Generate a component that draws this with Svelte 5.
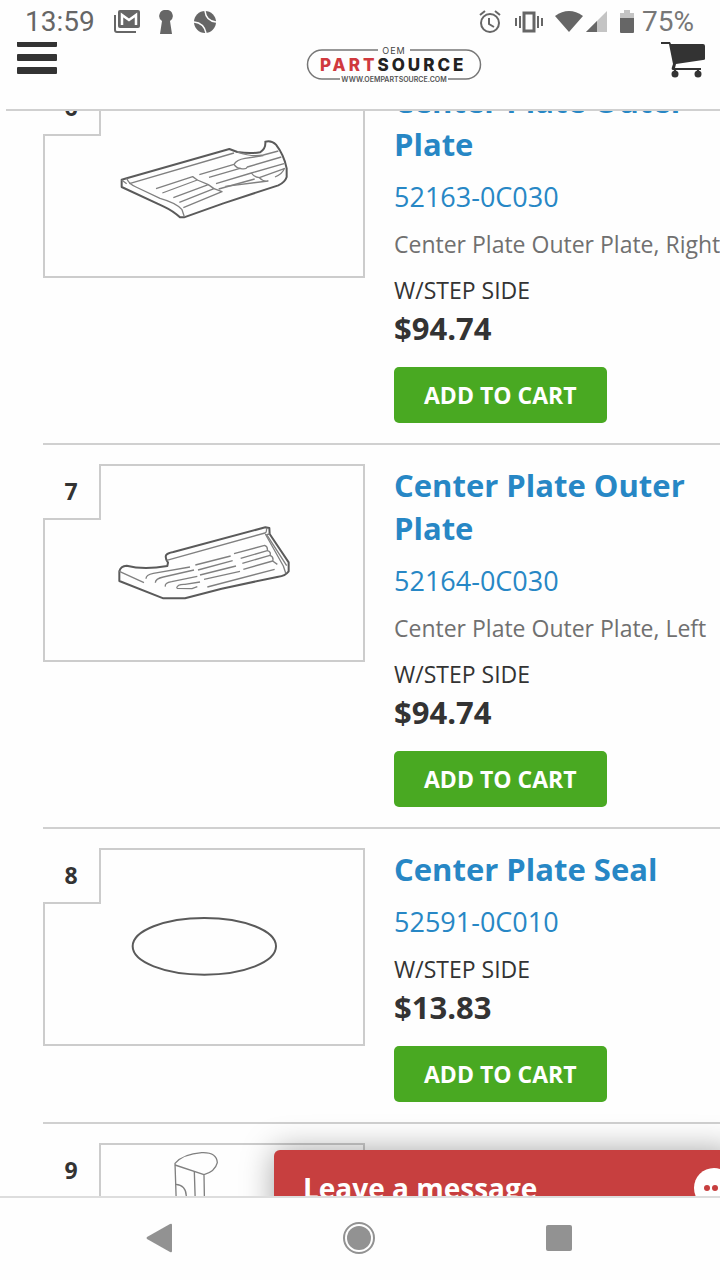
<script>
  import { onMount } from 'svelte';

  const parts = [
    {
      pos: 6, name: 'Center Plate Outer Plate', sku: '52163-0C030',
      desc: 'Center Plate Outer Plate, Right', price: '$94.74',
      viewBox: '45 -51 954 582',
      outline: [
        'M275 242 L290 238 L598 150 L622 159 Q660 165 690 160 Q708 150 706 128 Q724 123 738 137 Q762 168 770 208 V234 Q765 250 745 259 L580 313 L462 355 H450 Q430 336 400 322 L275 264 Z'
      ],
      detail: [
        'M290 238 Q296 255 318 264 L390 298 Q440 312 456 332 L463 353',
        'M298 254 L612 162', 'M275 243 L290 254',
        'M622 159 Q665 175 700 168 L745 156',
        'M378 269 L488 233 L502 243 L397 282', 'M502 243 L535 257 L430 296',
        'M535 257 L552 269 L448 310', 'M552 269 L576 278 L460 326',
        'M508 227 L612 196 Q620 182 645 178 L700 170',
        'M537 235 L630 208 Q648 213 652 204 L754 174', 'M612 196 Q620 208 632 208',
        'M558 254 L664 222 L762 194', 'M664 222 Q672 234 688 236 L765 208',
        'M566 270 L674 240', 'M688 236 Q700 249 714 246 L586 262',
        'M763 208 Q758 224 735 234'
      ]
    },
    {
      pos: 7, name: 'Center Plate Outer Plate', sku: '52164-0C030',
      desc: 'Center Plate Outer Plate, Left', price: '$94.74',
      viewBox: '45 36 954 582',
      outline: [
        'M268 352 Q272 336 290 335 Q340 348 412 336 L414 326 Q405 314 408 304 Q412 297 430 294 L706 220 L718 222 L719 240 L776 325 V352 Q765 366 745 368 L575 404 L465 433 H400 L268 381 Z'
      ],
      detail: [
        'M410 319 L705 237 Q710 236 710 221', 'M268 352 L342 386',
        'M706 240 L760 336 L767 357', 'M719 240 L710 242 L770 335',
        'M348 374 Q348 362 370 358 L480 339', 'M376 386 Q376 374 400 369 L492 348',
        'M406 398 Q403 387 425 383 L502 367', 'M440 402 Q442 390 465 391 L510 384 M440 403 L486 404 L502 398',
        'M496 333 L602 306', 'M504 348 L608 320', 'M510 363 L618 336', 'M522 376 L630 352',
        'M532 399 L734 346', 'M612 299 L704 274 Q714 278 712 290 L632 313',
        'M712 290 Q724 293 720 304 L637 328', 'M720 304 Q732 309 728 321 L640 346',
        'M728 321 L742 331'
      ]
    },
    {
      pos: 8, name: 'Center Plate Seal', sku: '52591-0C010',
      desc: '', price: '$13.83',
      viewBox: '45 33 954 582',
      outline: ['M308 322 A215 85 0 0 1 738 322 A215 85 0 0 1 308 322 Z'],
      detail: []
    },
    {
      pos: 9, name: 'Center Plate Cover', sku: '52165-0C010',
      desc: '', price: '$21.40',
      viewBox: '45 105 954 582',
      outline: [],
      detail: [
        'M440 310 L435 160 Q460 132 515 128 Q560 126 562 158 Q555 185 522 194 L524 310',
        'M435 165 L522 194', 'M493 185 L497 310', 'M437 223 Q468 225 469 258 V310'
      ]
    }
  ];

  let scroller;

  // the list opens part way into the first card
  onMount(() => {
    scroller.scrollTop = 52;
  });
</script>

<div class="screen">
  <div class="status">
    <div class="status-group">
      <span class="clock">13:59</span>
      <svg class="mail" width="28" height="24" viewBox="0 0 28 24">
        <path d="M2 5v15q0 2 2 2h19" fill="none" stroke="#666" stroke-width="2" />
        <rect x="5" y="0" width="22" height="18" rx="2" fill="#666" />
        <path d="M9 15V5l7 5 7-5v10" fill="none" stroke="#fff" stroke-width="2.500" />
      </svg>
      <svg class="keyhole" width="14" height="24" viewBox="0 0 14 24">
        <path d="M7 0a6 6 0 0 1 4 11l2 13H1l2-13A6 6 0 0 1 7 0z" fill="#666" />
      </svg>
      <svg width="22" height="22" viewBox="0 0 22 22">
        <circle cx="11" cy="11" r="11" fill="#666" />
        <path d="M11 0q1 10 11 11M0 11q10 1 12 11" fill="none" stroke="#fff" stroke-width="1.500" />
      </svg>
    </div>
    <div class="status-group">
      <svg width="22" height="24" viewBox="0 0 22 24" fill="none" stroke="#666" stroke-width="2">
        <circle cx="11" cy="13" r="9" />
        <path d="M10 8v6l5 3M1 5l5-4M21 5l-5-4" />
      </svg>
      <svg class="vibrate" width="28" height="22" viewBox="0 0 28 22" fill="none" stroke="#666">
        <rect x="9" y="2" width="10" height="18" stroke-width="3" />
        <path d="M1 7v8M5 5v12M23 5v12M27 7v8" stroke-width="2" />
      </svg>
      <svg class="wifi" width="28" height="22" viewBox="0 0 28 22">
        <path d="M0 5q14-10 28 0L14 21z" fill="#666" />
      </svg>
      <svg class="signal" width="22" height="22" viewBox="0 0 22 22">
        <path d="M21 0v21H0z" fill="#c4c4c4" />
        <path d="M11 10v11H0z" fill="#666" />
      </svg>
      <svg class="battery" width="14" height="24" viewBox="0 0 14 24">
        <path d="M4 0h6v3h4v6H0V3h4z" fill="#c4c4c4" />
        <path d="M0 8h14v14q0 1-1 1H1q-1 0-1-1z" fill="#666" />
      </svg>
      <span class="clock percent">75%</span>
    </div>
  </div>

  <header>
    <button class="icon-btn" aria-label="Menu">
      <svg width="40" height="32" viewBox="0 0 40 32" fill="#333">
        <path d="M0 0h40v4q0 1-1 1H1q-1 0-1-1z" />
        <rect y="12" width="40" height="7" rx="1" />
        <rect y="25" width="40" height="7" rx="1" />
      </svg>
    </button>
    <a class="logo" href="/" aria-label="OEM Part Source">
      <svg width="176" height="38" viewBox="0 0 176 38">
        <path d="M72 4H16a14 14 0 0 0 0 29h18M104 4h56a14 14 0 0 1 0 29h-18" fill="none" stroke="#777" stroke-width="1.500" />
        <text class="logo-small" x="88" y="8" text-anchor="middle">OEM</text>
        <text class="logo-main" x="14" y="25"><tspan fill="#d0393e">PART</tspan><tspan>SOURCE</tspan></text>
        <text class="logo-url" x="88" y="36" text-anchor="middle">WWW.OEMPARTSOURCE.COM</text>
      </svg>
    </a>
    <button class="icon-btn" aria-label="Cart">
      <svg width="44" height="36" viewBox="0 0 44 36" fill="#333">
        <path d="M0 0h9l1 2h32q2 0 2 2v13q0 1-2 1L15 22l-1 4h26v2H12q-2 0-1-3l1-3L8 2H0z" />
        <circle cx="14" cy="32" r="3.500" />
        <circle cx="37" cy="32" r="3.500" />
        <path d="M13 26h2v4h-2zM36 26h2v4h-2z" />
      </svg>
    </button>
  </header>

  <main>
    <div class="scroller" bind:this={scroller}>
      {#each parts as part (part.pos)}
        <article>
          <div class="thumb">
            <svg viewBox={part.viewBox} fill="none" stroke-linejoin="round">
              {#each part.outline as d}
                <path {d} stroke="#5a5a5a" stroke-width="6" />
              {/each}
              {#each part.detail as d}
                <path {d} stroke="#808080" stroke-width="4" />
              {/each}
            </svg>
            <span class="pos">{part.pos}</span>
          </div>
          <div class="info">
            <h2><a href="/parts/{part.sku}">{part.name}</a></h2>
            <a class="sku" href="/parts/{part.sku}">{part.sku}</a>
            {#if part.desc}
              <p class="desc">{part.desc}</p>
            {/if}
            <p class="fit">W/STEP SIDE</p>
            <p class="price">{part.price}</p>
            <button class="add">ADD TO CART</button>
          </div>
        </article>
      {/each}
    </div>

    <button class="chat">
      <span>Leave a message</span>
      <svg width="40" height="40" viewBox="0 0 40 40">
        <circle cx="20" cy="20" r="20" fill="#fff" />
        <g fill="#c73f3f">
          <circle cx="13" cy="20" r="3" />
          <circle cx="21" cy="20" r="3" />
          <circle cx="29" cy="20" r="3" />
        </g>
      </svg>
    </button>
  </main>

  <nav>
    <button aria-label="Back">
      <svg width="26" height="30" viewBox="0 0 26 30">
        <path d="M24 1q2-1 2 1v26q0 2-2 1L1 16q-1-1 0-2z" fill="#929292" />
      </svg>
    </button>
    <button aria-label="Home">
      <svg width="32" height="32" viewBox="0 0 32 32">
        <circle cx="16" cy="16" r="15" fill="none" stroke="#929292" stroke-width="2" />
        <circle cx="16" cy="16" r="12" fill="#929292" />
      </svg>
    </button>
    <button aria-label="Recent apps">
      <svg width="28" height="28" viewBox="0 0 28 28">
        <rect x="1" y="1" width="26" height="26" rx="2" fill="#929292" />
      </svg>
    </button>
  </nav>
</div>

<style>
  :global(body) { background: #fefefe; }

  .screen {
    display: flex;
    flex-direction: column;
    height: 100vh;
    overflow: hidden;
    background: #fefefe;
    color: #333;
    font-family: "Open Sans", "Noto Sans", sans-serif;
  }

  svg { display: block; flex-shrink: 0; }
  h2, p { margin: 0; }
  a { color: #2787c5; text-decoration: none; }
  button { font-family: inherit; border: 0; padding: 0; background: none; cursor: pointer; }

  .status {
    display: flex; align-items: center; justify-content: space-between;
    height: 42px; padding: 2px 26px 0 25px; flex-shrink: 0; box-sizing: border-box;
  }
  .status-group { display: flex; align-items: center; }
  .clock {
    font-family: Roboto, sans-serif; font-size: 28px;
    line-height: 42px; color: #666;
  }
  .mail    { margin-left: 18px; }
  .keyhole { margin: 0 21px 0 18px; }
  .vibrate { margin-left: 14px; }
  .wifi    { margin-left: 12px; }
  .signal  { margin-left: 3px; }
  .battery { margin: 0 8px 0 12px; }
  .percent { color: #777; }

  header {
    display: flex; align-items: flex-start; justify-content: space-between;
    height: 67px; margin-left: 6px; padding: 0 15px 0 11px;
    border-bottom: 2px solid #d0d0d0; flex-shrink: 0;
  }
  .logo { padding: 4px 0 0 70px; }
  .logo-main {
    font-family: Inter, sans-serif; font-size: 17px; font-weight: 800;
    letter-spacing: 3px; fill: #222;
  }
  .logo-small { font-family: Inter, sans-serif; font-size: 9px; letter-spacing: 1px; fill: #444; }
  .logo-url { font-family: Inter, sans-serif; font-size: 7px; font-weight: 600; fill: #555; }

  main { position: relative; display: flex; flex: 1; min-height: 0; overflow: hidden; }
  .scroller { flex: 1; min-width: 0; overflow-x: hidden; overflow-y: auto; scrollbar-width: none; }

  article {
    display: flex; align-items: flex-start; gap: 29px;
    margin-left: 43px; padding: 19px 0 20px;
    border-top: 2px solid #d0d0d0;
  }
  .thumb {
    position: relative; width: 322px; flex-shrink: 0;
    border: 2px solid #ccc; box-sizing: border-box;
  }
  .pos {
    position: absolute; top: -2px; left: -2px;
    width: 58px; height: 56px; box-sizing: border-box;
    border: solid #ccc; border-width: 0 2px 2px 0;
    background: #fefefe; text-align: center;
    font-size: 23px; font-weight: 700; line-height: 54px;
  }

  .info { flex: 1; min-width: 0; }
  h2 { font-size: 31px; font-weight: 700; line-height: 43px; }
  .sku { display: block; margin: 15px 0 14px; font-size: 27px; font-weight: 500; line-height: 32px; }
  .desc { margin-bottom: 12px; font-size: 23px; line-height: 34px; color: #707070; white-space: nowrap; }
  .fit { font-size: 23px; line-height: 34px; }
  .price { font-size: 31px; font-weight: 700; line-height: 42px; }
  .add {
    display: block; height: 56px; margin-top: 18px; padding: 0 30px;
    border-radius: 5px; background: #49a922; color: #fff;
    font-size: 23px; font-weight: 700;
  }

  .chat {
    position: absolute; left: 274px; right: 0; bottom: -30px;
    display: flex; align-items: center; justify-content: space-between;
    height: 76px; padding-left: 29px; margin-right: -14px;
    border-radius: 6px 0 0 0; background: #c73f3f; color: #fff;
    box-shadow: 0 0 32px rgba(0, 0, 0, .35);
    font-size: 28px; font-weight: 700;
  }

  nav {
    display: grid; grid-template-columns: repeat(3, 1fr);
    height: 80px; padding: 0 61px 2px 59px; flex-shrink: 0;
    border-top: 2px solid #ddd;
  }
  nav button { display: flex; align-items: center; justify-content: center; }
</style>
